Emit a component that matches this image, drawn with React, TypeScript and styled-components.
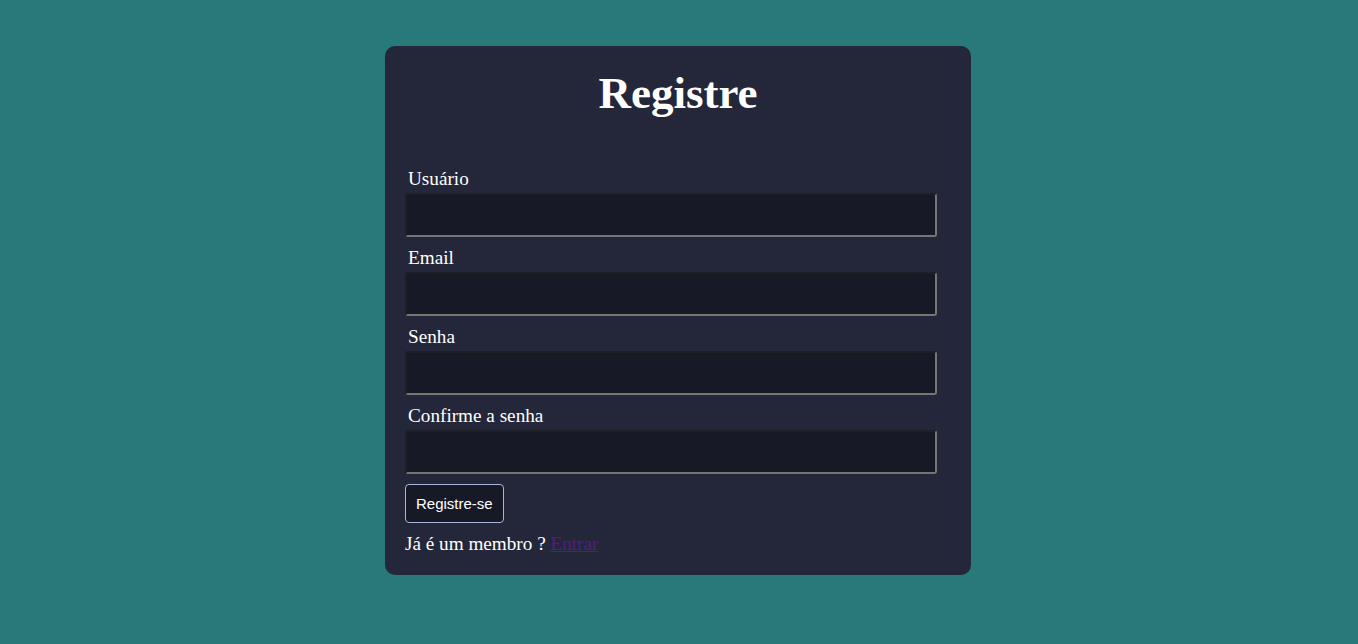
import React from "react";
import styled, { createGlobalStyle } from "styled-components";

const Global = createGlobalStyle`
  html, body {
    margin: 0;
    padding: 0;
    background: #287a7a;
    min-height: 100%;
  }
  body {
    font-family: "Liberation Serif", "Times New Roman", serif;
  }
  * { box-sizing: border-box; }
`;

const Page = styled.div`
  min-height: 644px;
  display: flex;
  justify-content: center;
  align-items: flex-start;
  padding-top: 46px;
  padding-right: 2px;
`;

const Card = styled.form`
  width: 586px;
  background: #242739;
  border-radius: 10px;
  padding: 20px;
  display: flex;
  flex-direction: column;
  color: #ffffff;
`;

const Title = styled.h1`
  margin: 2px 0 50px 0;
  text-align: center;
  font-size: 45px;
  font-weight: bold;
  line-height: 50px;
  color: #ffffff;
`;

const Field = styled.div`
  display: flex;
  flex-direction: column;
  gap: 3px;
  margin-bottom: 10px;
`;

const Label = styled.label`
  display: block;
  margin-left: 3px;
  font-size: 19.2px;
  line-height: 22px;
  color: #ffffff;
`;

const Input = styled.input`
  width: 532px;
  height: 44px;
  background: #171927;
  border-style: solid;
  border-width: 2px;
  border-color: #1e1f25 #767676 #767676 #1e1f25;
  border-radius: 3px;
  color: #ffffff;
  padding: 0 8px;
  font-size: 16px;
  outline: none;
`;

const Button = styled.button`
  align-self: flex-start;
  padding: 10px;
  background: #171927;
  color: #ffffff;
  border: 1px solid #a9b7d6;
  border-radius: 4px;
  font-family: "Liberation Sans", Arial, sans-serif;
  font-size: 15px;
  line-height: 17px;
  cursor: pointer;
`;

const Footer = styled.p`
  margin: 10px 0 0 0;
  font-size: 19.2px;
  line-height: 22px;
  color: #ffffff;
`;

const Link = styled.a`
  color: #551a8b;
  text-decoration: underline;
`;

const fields = [
  { id: "usuario", label: "Usuário", type: "text" },
  { id: "email", label: "Email", type: "email" },
  { id: "senha", label: "Senha", type: "password" },
  { id: "confirme", label: "Confirme a senha", type: "password" },
];

export default function App() {
  return (
    <>
      <Global />
      <Page>
        <Card onSubmit={(e) => e.preventDefault()}>
          <Title>Registre</Title>
          {fields.map((f) => (
            <Field key={f.id}>
              <Label htmlFor={f.id}>{f.label}</Label>
              <Input id={f.id} type={f.type} />
            </Field>
          ))}
          <Button type="submit">Registre-se</Button>
          <Footer>
            Já é um membro ? <Link href="#">Entrar</Link>
          </Footer>
        </Card>
      </Page>
    </>
  );
}
